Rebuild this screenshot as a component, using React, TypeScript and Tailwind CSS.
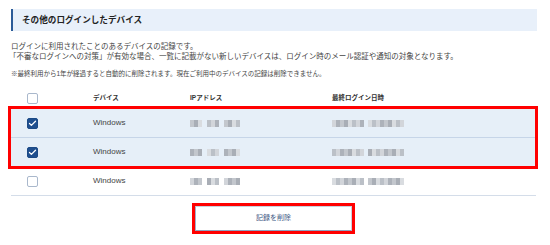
import { Check } from "lucide-react";

type Row = {
  device: string;
  selected: boolean;
};

const rows: Row[] = [
  { device: "Windows", selected: true },
  { device: "Windows", selected: true },
  { device: "Windows", selected: false },
];

const shades = ["#c3c7cd", "#adb2ba", "#d2d5da", "#bbc0c7", "#d9dce0", "#a9aeb6"];

// pixelated placeholder for redacted values
function Mosaic({ groups, seed }: { groups: number[]; seed: number }) {
  return (
    <div className="flex items-center gap-[5px]">
      {groups.map((cells, g) => (
        <div key={g} className="flex h-[7px]">
          {Array.from({ length: cells }).map((_, i) => (
            <span
              key={i}
              className="block h-[7px] w-[4px]"
              style={{ backgroundColor: shades[(seed + g * 3 + i * 5) % shades.length] }}
            />
          ))}
        </div>
      ))}
    </div>
  );
}

function Checkbox({ checked }: { checked: boolean }) {
  if (checked) {
    return (
      <div className="flex size-[11px] items-center justify-center rounded-[2px] border border-[#1c4a86] bg-[#1f4f8f]">
        <Check className="size-[9px] text-white" strokeWidth={3.5} />
      </div>
    );
  }
  return <div className="size-[11px] rounded-[2px] border border-[#a9b8cc] bg-white" />;
}

function TableRow({ row, index }: { row: Row; index: number }) {
  return (
    <div
      className={
        "grid h-[29px] grid-cols-[82px_97px_142px_1fr] items-center border-t border-[#c6d5e8] " +
        (row.selected ? "bg-[#e6eff8]" : "bg-white")
      }
    >
      <div className="pl-[16px]">
        <Checkbox checked={row.selected} />
      </div>
      <div className="text-[8px] text-[#444]">{row.device}</div>
      <Mosaic groups={[3, 3, 4]} seed={index} />
      <div className="flex items-center gap-[4px]">
        <Mosaic groups={[8]} seed={index + 2} />
        <Mosaic groups={[9]} seed={index + 4} />
      </div>
    </div>
  );
}

export default function App() {
  return (
    <div
      className="h-[245px] w-[550px] overflow-hidden bg-white pl-[11px] pr-[14px] pt-[9px] text-[#444]"
      style={{ fontFamily: '"Liberation Sans", "Noto Sans CJK JP", sans-serif' }}
    >
      <div className="mr-[-1px] flex h-[22px] items-center border-l-[2px] border-[#2b5b98] bg-[#e8f0fa] pl-[9px] text-[8.6px] font-bold text-[#222]">
        その他のログインしたデバイス
      </div>

      <div className="mt-[11px] text-[7.5px] leading-[10px]">
        <p>ログインに利用されたことのあるデバイスの記録です。</p>
        <p className="-ml-[2px]">
          「不審なログインへの対策」が有効な場合、一覧に記載がない新しいデバイスは、ログイン時のメール認証や通知の対象となります。
        </p>
      </div>

      <p className="mt-[8px] text-[6.5px] leading-[8px]">
        ※最終利用から1年が経過すると自動的に削除されます。現在ご利用中のデバイスの記録は削除できません。
      </p>

      <div className="mt-[10px]">
        <div className="grid h-[20px] grid-cols-[82px_97px_142px_1fr] items-center text-[6.5px] font-bold text-[#333]">
          <div className="pl-[16px]">
            <Checkbox checked={false} />
          </div>
          <div>デバイス</div>
          <div>IPアドレス</div>
          <div>最終ログイン日時</div>
        </div>

        <div className="relative">
          {rows.slice(0, 2).map((row, i) => (
            <TableRow key={i} row={row} index={i} />
          ))}
          <div className="pointer-events-none absolute -left-[3px] -right-[2px] -top-[2px] -bottom-[3px] border-[3px] border-[#ff0000]" />
        </div>
        {rows.slice(2).map((row, i) => (
          <TableRow key={i + 2} row={row} index={i + 2} />
        ))}
        <div className="h-[1px] bg-[#d4dde9]" />
      </div>

      <div className="mt-[10px] flex justify-center">
        <button
          type="button"
          className="h-[25px] w-[157px] border border-[#c8d2de] border-b-[#8ea3bf] border-l-[#9fb2cb] bg-white text-[7px] text-[#3d5884] outline-[3px] outline-solid outline-[#ff0000]"
        >
          記録を削除
        </button>
      </div>
    </div>
  );
}
